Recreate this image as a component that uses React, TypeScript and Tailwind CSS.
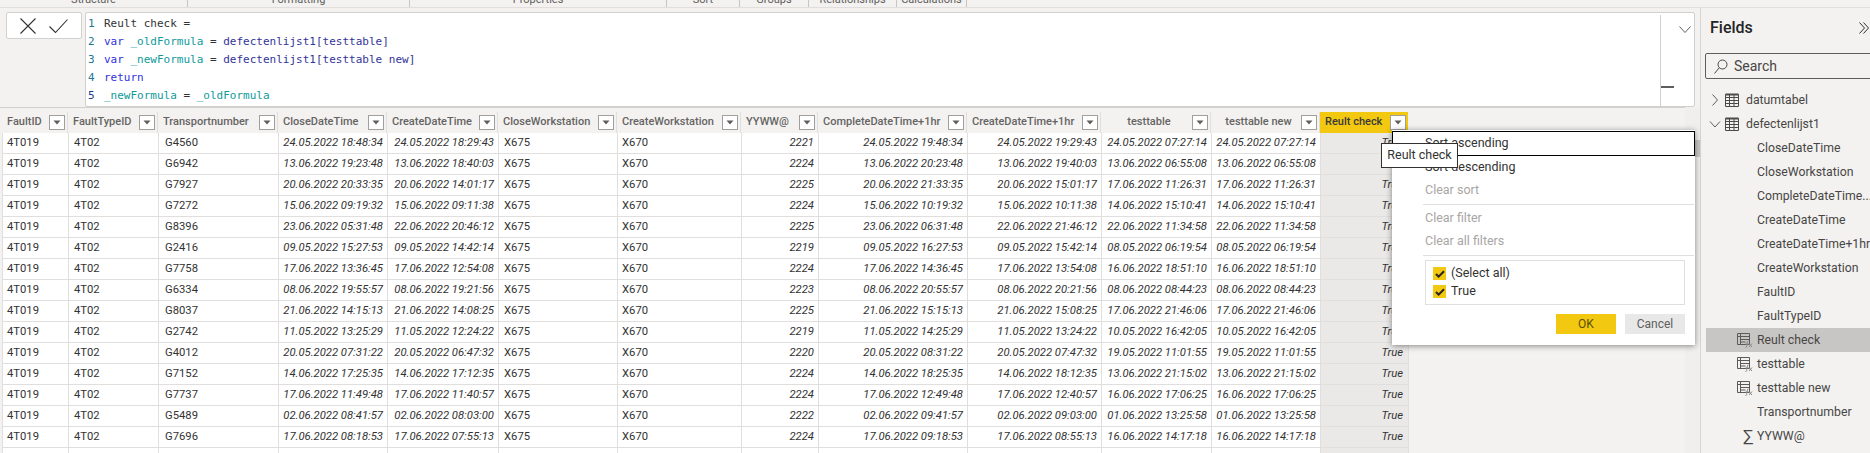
import React from "react";

const rows: string[][] = [
  ["G4560","24.05.2022 18:48:34","24.05.2022 18:29:43","2221","24.05.2022 19:48:34","24.05.2022 19:29:43","24.05.2022 07:27:14"],
  ["G6942","13.06.2022 19:23:48","13.06.2022 18:40:03","2224","13.06.2022 20:23:48","13.06.2022 19:40:03","13.06.2022 06:55:08"],
  ["G7927","20.06.2022 20:33:35","20.06.2022 14:01:17","2225","20.06.2022 21:33:35","20.06.2022 15:01:17","17.06.2022 11:26:31"],
  ["G7272","15.06.2022 09:19:32","15.06.2022 09:11:38","2224","15.06.2022 10:19:32","15.06.2022 10:11:38","14.06.2022 15:10:41"],
  ["G8396","23.06.2022 05:31:48","22.06.2022 20:46:12","2225","23.06.2022 06:31:48","22.06.2022 21:46:12","22.06.2022 11:34:58"],
  ["G2416","09.05.2022 15:27:53","09.05.2022 14:42:14","2219","09.05.2022 16:27:53","09.05.2022 15:42:14","08.05.2022 06:19:54"],
  ["G7758","17.06.2022 13:36:45","17.06.2022 12:54:08","2224","17.06.2022 14:36:45","17.06.2022 13:54:08","16.06.2022 18:51:10"],
  ["G6334","08.06.2022 19:55:57","08.06.2022 19:21:56","2223","08.06.2022 20:55:57","08.06.2022 20:21:56","08.06.2022 08:44:23"],
  ["G8037","21.06.2022 14:15:13","21.06.2022 14:08:25","2225","21.06.2022 15:15:13","21.06.2022 15:08:25","17.06.2022 21:46:06"],
  ["G2742","11.05.2022 13:25:29","11.05.2022 12:24:22","2219","11.05.2022 14:25:29","11.05.2022 13:24:22","10.05.2022 16:42:05"],
  ["G4012","20.05.2022 07:31:22","20.05.2022 06:47:32","2220","20.05.2022 08:31:22","20.05.2022 07:47:32","19.05.2022 11:01:55"],
  ["G7152","14.06.2022 17:25:35","14.06.2022 17:12:35","2224","14.06.2022 18:25:35","14.06.2022 18:12:35","13.06.2022 21:15:02"],
  ["G7737","17.06.2022 11:49:48","17.06.2022 11:40:57","2224","17.06.2022 12:49:48","17.06.2022 12:40:57","16.06.2022 17:06:25"],
  ["G5489","02.06.2022 08:41:57","02.06.2022 08:03:00","2222","02.06.2022 09:41:57","02.06.2022 09:03:00","01.06.2022 13:25:58"],
  ["G7696","17.06.2022 08:18:53","17.06.2022 07:55:13","2224","17.06.2022 09:18:53","17.06.2022 08:55:13","16.06.2022 14:17:18"],
];

const COLS = "grid grid-cols-[66px_90px_120px_109px_111px_119px_124px_77px_149px_134px_110px_109px_88px]";

const headers: { label: string; center?: boolean }[] = [
  { label: "FaultID" }, { label: "FaultTypeID" }, { label: "Transportnumber" }, { label: "CloseDateTime" },
  { label: "CreateDateTime" }, { label: "CloseWorkstation" }, { label: "CreateWorkstation" }, { label: "YYWW@" },
  { label: "CompleteDateTime+1hr" }, { label: "CreateDateTime+1hr" }, { label: "testtable", center: true }, { label: "testtable new", center: true },
];

function FilterBtn() {
  return (
    <span className="flex h-[15px] w-[16px] shrink-0 items-center justify-center border border-[#a19f9d] bg-white">
      <svg width="8" height="5" viewBox="0 0 8 5"><path d="M0.5 0.5h7L4 4.5z" fill="#605e5c" /></svg>
    </span>
  );
}

function HeaderCell({ label, center }: { label: string; center?: boolean }) {
  return (
    <div className="flex h-[21px] items-center justify-between border-r border-[#e1dfdd] pl-[5px] pr-[2px] text-[11px] text-[#666462] font-medium">
      <span className={center ? "flex-1 text-center whitespace-nowrap" : "whitespace-nowrap"}>{label}</span>
      <FilterBtn />
    </div>
  );
}

function Row({ r }: { r: string[] }) {
  const cell = "border-r border-b border-[#e1dfdd] h-[21px] leading-[20px] whitespace-nowrap overflow-hidden";
  const dt = `${cell} text-right italic pr-[4px]`;
  return (
    <div className={`${COLS} bg-white text-[#333]`}>
      <div className={`${cell} pl-[4px]`}>4T019</div>
      <div className={`${cell} pl-[5px]`}>4T02</div>
      <div className={`${cell} pl-[6px]`}>{r[0]}</div>
      <div className={dt}>{r[1]}</div>
      <div className={dt}>{r[2]}</div>
      <div className={`${cell} pl-[5px]`}>X675</div>
      <div className={`${cell} pl-[4px]`}>X670</div>
      <div className={dt}>{r[3]}</div>
      <div className={dt}>{r[4]}</div>
      <div className={dt}>{r[5]}</div>
      <div className={dt}>{r[6]}</div>
      <div className={dt}>{r[6]}</div>
      <div className={`${cell} bg-[#ebe9e7] text-right italic pr-[5px]`}>True</div>
    </div>
  );
}

function TableIcon() {
  return (
    <svg width="14" height="14" viewBox="0 0 14 14" fill="none" stroke="#4a4a4a" strokeWidth="1" className="shrink-0">
      <path d="M0.5 1.5h13v12h-13z M0.5 4.5h13 M0.5 7.5h13 M0.5 10.5h13 M4.5 1.5v12 M9 1.5v12" />
      <path d="M0.5 1.5h13" strokeWidth="2" />
    </svg>
  );
}

function CalcIcon() {
  return (
    <svg width="16" height="16" viewBox="0 0 16 16" fill="none" className="shrink-0">
      <path d="M0.5 1.5h12v11h-12z M0.5 4.5h12 M3.5 1.5v11 M3.5 7.5h9 M3.5 10h5" stroke="#5a5a5a" />
      <path d="M8.5 15.5c1.5 0 1-1.5 1.5-4s0.5-2.5 1.5-2.5 M8.5 12h3 M12 11.5l3 3.5 M15 11.5l-3 3.5" stroke="#8a8886" fill="none" />
    </svg>
  );
}

function Field({ label, icon, selected }: { label: string; icon?: React.ReactNode; selected?: boolean }) {
  return (
    <div className={`flex h-[24px] items-center ${selected ? "bg-[#c8c6c4]" : ""}`}>
      <span className="flex w-[51px] shrink-0 justify-end pr-[4px]">{icon}</span>
      <span className="whitespace-nowrap">{label}</span>
    </div>
  );
}

function Chevron({ down }: { down?: boolean }) {
  return (
    <svg width="12" height="12" viewBox="0 0 12 12" fill="none" stroke="#605e5c" className="shrink-0">
      {down ? <path d="M1 3.5l5 5.5 5-5.5" /> : <path d="M3.5 0.5l5 5.5-5 5.5" />}
    </svg>
  );
}

function Check() {
  return (
    <span className="flex h-[13px] w-[13px] items-center justify-center bg-[#f2c811]">
      <svg width="10" height="8" viewBox="0 0 10 8" fill="none" stroke="#252423" strokeWidth="2"><path d="M1 4l2.6 2.6L9 1.2" /></svg>
    </span>
  );
}

const RIBBON: [string, string][] = [
  ["w-[188px]", "Structure"], ["w-[222px]", "Formatting"], ["w-[257px]", "Properties"], ["w-[73px]", "Sort"],
  ["w-[69px]", "Groups"], ["w-[88px]", "Relationships"], ["w-[70px]", "Calculations"],
];

export default function App() {
  return (
    <div className="relative flex h-[453px] w-[1870px] flex-col overflow-hidden bg-[#f3f2f1] font-['Roboto',sans-serif] text-[11.25px] text-[#333]">
      {/* ribbon remainder */}
      <div className="flex h-[8px] shrink-0 overflow-hidden border-b border-[#e1dfdd] text-[11px] text-[#605e5c]">
        {RIBBON.map(([w, t]) => (
          <div key={t} className={`${w} h-[7px] border-r border-[#c8c6c4] text-center leading-[6px] [&>span]:relative [&>span]:-top-[3px]`}>
            <span>{t}</span>
          </div>
        ))}
      </div>

      <div className="flex min-h-0 flex-1">
        {/* main */}
        <div className="flex w-[1701px] shrink-0 flex-col border-r border-[#d8d6d4]">
          {/* formula row */}
          <div className="flex h-[99px] shrink-0 pl-[6px] pr-[5px] pt-[4px]">
            <div className="flex h-[27px] w-[76px] shrink-0 items-center justify-center gap-[13px] rounded-[2px] border border-[#d2d0ce] bg-white">
              <svg width="16" height="16" viewBox="0 0 16 16" fill="none" stroke="#323130" strokeWidth="1.1"><path d="M0.5 0.5l15 15 M15.5 0.5l-15 15" /></svg>
              <svg width="19" height="14" viewBox="0 0 19 14" fill="none" stroke="#323130" strokeWidth="1.1"><path d="M0.5 7.5l6 6L18.5 0.5" /></svg>
            </div>
            <div className="ml-[3px] flex h-[95px] flex-1 rounded-[2px] border border-[#d2d0ce] bg-white">
              <div className="flex-1 pt-[2px] pl-[2px] font-['DejaVu_Sans_Mono',monospace] text-[11px] leading-[18px] text-[#333]">
                <div className="flex"><span className="w-[16px] text-[#237893]">1</span><span>Reult check =</span></div>
                <div className="flex"><span className="w-[16px] text-[#237893]">2</span><span className="whitespace-pre"><span className="text-[#3232e0]">var</span> <span className="text-[#0e9a9a]">_oldFormula</span> = <span className="text-[#33339a]">defectenlijst1[testtable]</span></span></div>
                <div className="flex"><span className="w-[16px] text-[#237893]">3</span><span className="whitespace-pre"><span className="text-[#3232e0]">var</span> <span className="text-[#0e9a9a]">_newFormula</span> = <span className="text-[#33339a]">defectenlijst1[testtable new]</span></span></div>
                <div className="flex"><span className="w-[16px] text-[#237893]">4</span><span className="text-[#3232e0]">return</span></div>
                <div className="flex"><span className="w-[16px] text-[#1a3a8a]">5</span><span className="whitespace-pre"><span className="text-[#0e9a9a]">_newFormula</span> = <span className="text-[#0e9a9a]">_oldFormula</span></span></div>
              </div>
              <div className="relative mt-[2px] w-[34px] shrink-0 border-l border-[#d2d0ce]">
                <svg width="12" height="7" viewBox="0 0 12 7" fill="none" stroke="#605e5c" className="absolute left-[18px] top-[11px]"><path d="M0.5 0.5l5.5 6 5.5-6" /></svg>
                <div className="absolute left-0 top-[71px] h-[2px] w-[13px] bg-[#605e5c]" />
              </div>
            </div>
          </div>

          {/* grid */}
          <div className="flex min-h-0 flex-1">
            <div className="min-w-0 flex-1 overflow-hidden border-t border-[#d2d0ce] pt-[4px]">
              <div className={`${COLS} ml-[2px] w-[1406px]`}>
                {headers.map((h) => <HeaderCell key={h.label} label={h.label} center={h.center} />)}
                <div className="flex h-[21px] items-center justify-between bg-[#f2c811] pl-[5px] pr-[2px] text-[11px] font-medium text-[#3b3a39]">
                  <span className="whitespace-nowrap">Reult check</span>
                  <FilterBtn />
                </div>
              </div>
              <div className="ml-[2px] w-[1406px] border-l border-[#e1dfdd]">
                {rows.map((r) => <Row key={r[0]} r={r} />)}
                <div className={`${COLS} h-[21px] bg-white`}>
                  {headers.map((h) => <div key={h.label} className="border-r border-[#e1dfdd]" />)}
                  <div className="bg-[#ebe9e7] border-r border-[#e1dfdd]" />
                </div>
              </div>
            </div>
            <div className="relative w-[15px] shrink-0 bg-[#f0efee]">
              <div className="absolute right-0 top-[33px] h-[17px] w-[5px] bg-[#c8c6c4]" />
            </div>
          </div>
        </div>

        {/* fields pane */}
        <div className="flex min-w-0 flex-1 flex-col overflow-hidden text-[12.25px] text-[#484644]">
          <div className="flex h-[45px] shrink-0 items-start justify-between pl-[9px] pr-[1px] pt-[9px]">
            <span className="text-[16px] font-medium leading-[22px] text-[#252423]">Fields</span>
            <svg width="10" height="12" viewBox="0 0 10 12" fill="none" stroke="#323130" className="mt-[5px]"><path d="M0.5 0.5l5 5.5-5 5.5 M4.5 0.5l5 5.5-5 5.5" /></svg>
          </div>
          <div className="ml-[4px] flex h-[26px] w-[180px] shrink-0 items-center gap-[6px] rounded-[2px] border border-[#605e5c] pl-[8px] text-[14px] text-[#484644]">
            <svg width="14" height="15" viewBox="0 0 14 15" fill="none" stroke="#484644"><circle cx="8.5" cy="5.5" r="4.5" /><path d="M5.2 8.8L0.5 14.5" /></svg>
            <span>Search</span>
          </div>
          <div className="mt-[9px]">
            <div className="flex h-[24px] items-center gap-[4px] pl-[8px]"><Chevron /><TableIcon /><span className="ml-[3px]">datumtabel</span></div>
            <div className="flex h-[24px] items-center gap-[4px] pl-[8px]"><Chevron down /><TableIcon /><span className="ml-[3px]">defectenlijst1</span></div>
            <div className="ml-[5px]">
              <Field label="CloseDateTime" />
              <Field label="CloseWorkstation" />
              <Field label="CompleteDateTime..." />
              <Field label="CreateDateTime" />
              <Field label="CreateDateTime+1hr" />
              <Field label="CreateWorkstation" />
              <Field label="FaultID" />
              <Field label="FaultTypeID" />
              <Field label="Reult check" icon={<CalcIcon />} selected />
              <Field label="testtable" icon={<CalcIcon />} />
              <Field label="testtable new" icon={<CalcIcon />} />
              <Field label="Transportnumber" />
              <Field label="YYWW@" icon={<span className="text-[17px] leading-none text-[#484644]">∑</span>} />
            </div>
          </div>
        </div>
      </div>

      {/* filter menu */}
      <div className="absolute left-[1392px] top-[130px] flex h-[215px] w-[303px] flex-col bg-white text-[12.5px] text-[#333] shadow-[0_1px_6px_rgba(0,0,0,0.45)]">
        <div className="mt-px h-[25px] border border-black pl-[32px] leading-[22px]">Sort ascending</div>
        <div className="h-[23px] pl-[33px] leading-[22px]">Sort descending</div>
        <div className="h-[23px] pl-[33px] leading-[22px] text-[#a8a6a4]">Clear sort</div>
        <div className="ml-[31px] mr-[1px] mt-[2px] h-px bg-[#e1dfdd]" />
        <div className="mt-[2px] h-[23px] pl-[33px] leading-[22px] text-[#a8a6a4]">Clear filter</div>
        <div className="h-[23px] pl-[33px] leading-[22px] text-[#a8a6a4]">Clear all filters</div>
        <div className="ml-[31px] mr-[1px] mt-[2px] h-px bg-[#e1dfdd]" />
        <div className="ml-[33px] mr-[10px] mt-[4px] flex h-[45px] flex-col justify-center gap-[5px] border border-[#e1dfdd] pl-[7px]">
          <div className="flex h-[13px] items-center gap-[5px]"><Check /><span>(Select all)</span></div>
          <div className="flex h-[13px] items-center gap-[5px]"><Check /><span>True</span></div>
        </div>
        <div className="mr-[10px] mt-[9px] flex justify-end gap-[9px]">
          <div className="flex h-[20px] w-[60px] items-center justify-center bg-[#f2c811] text-[12px] text-[#5a5000]">OK</div>
          <div className="flex h-[20px] w-[60px] items-center justify-center bg-[#e8e8e8] text-[12px] text-[#605e5c]">Cancel</div>
        </div>
      </div>

      {/* tooltip */}
      <div className="absolute left-[1381px] top-[143px] flex h-[25px] w-[77px] items-center justify-center border border-[#323130] bg-white text-[12.5px] text-[#333]">Reult check</div>
    </div>
  );
}
